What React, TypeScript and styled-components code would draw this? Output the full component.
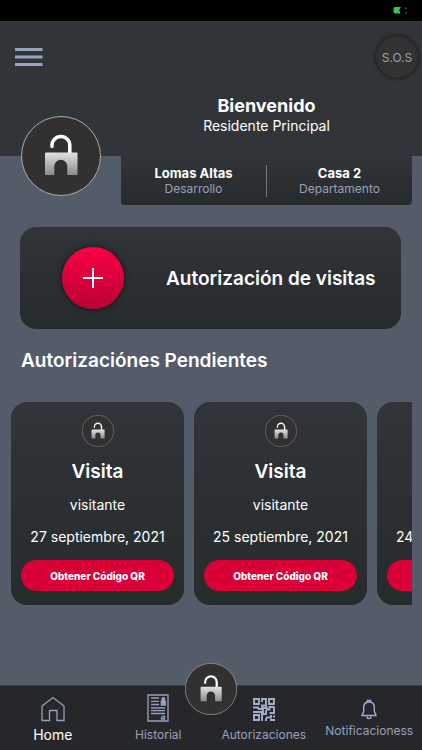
import React, { useId } from "react";
import styled, { createGlobalStyle } from "styled-components";

const GlobalStyle = createGlobalStyle`
  *, *::before, *::after { box-sizing: border-box; }
  body {
    margin: 0;
    background: #545b69;
    color: #fff;
    font-family: Inter, "Liberation Sans", sans-serif;
  }
  h1, h2, h3, p { margin: 0; }
  button { font: inherit; color: inherit; border: 0; padding: 0; cursor: pointer; }
  a { color: inherit; text-decoration: none; }
  svg { display: block; }
`;

const Screen = styled.div`
  display: flex;
  flex-direction: column;
  min-height: 100vh;
`;

const StatusBar = styled.div`
  display: flex;
  justify-content: flex-end;
  align-items: center;
  height: 21px;
  padding-right: 14px;
  background: #000;
`;

const Header = styled.header`
  background: #313439;
  padding: 15px 4px 22px 15px;
`;

const TopRow = styled.div`
  display: flex;
  justify-content: space-between;
  align-items: center;
`;

const MenuButton = styled.button`
  background: none;
`;

const SosButton = styled.button`
  width: 42px;
  height: 42px;
  border-radius: 50%;
  background: #333131;
  color: #98a1bb;
  font-size: 12px;
  box-shadow: 0 0 4px rgba(0, 0, 0, 0.7);
`;

const Greeting = styled.div`
  display: flex;
  flex-direction: column;
  align-items: center;
  margin: 16px 6px 0 106px;
`;

const GreetingTitle = styled.h1`
  font-size: 18px;
  line-height: 24px;
  font-weight: 700;
`;

const GreetingText = styled.p`
  font-size: 14px;
  line-height: 16px;
`;

const Profile = styled.section`
  display: flex;
  align-items: flex-start;
  gap: 20px;
  padding: 0 10px 0 21px;
`;

const Avatar = styled.div`
  flex: none;
  width: 80px;
  height: 80px;
  margin-top: -40px;
  margin-bottom: -18px;
`;

const HomePanel = styled.dl`
  flex: 1;
  display: flex;
  align-items: center;
  margin: 0;
  height: 49px;
  border-radius: 0 0 4px 4px;
  background: linear-gradient(#313439, #262b2c);
`;

const HomeFact = styled.div`
  flex: 1;
  display: flex;
  flex-direction: column-reverse;
  align-items: center;
  & + & { border-left: 1px solid #74777b; }
`;

const FactLabel = styled.dt`
  color: #98a1bb;
  font-size: 12px;
  line-height: 16px;
`;

const FactValue = styled.dd`
  margin: 0;
  font-size: 13px;
  line-height: 16px;
  font-weight: 700;
`;

const Authorize = styled.button`
  display: flex;
  align-items: center;
  gap: 42px;
  margin: 22px 21px 0 20px;
  padding: 20px 20px 20px 42px;
  border-radius: 16px;
  background: linear-gradient(#313439, #262b2c);
  font-size: 19px;
  font-weight: 600;
  text-align: left;
`;

const PlusDisc = styled.span`
  flex: none;
  display: grid;
  place-items: center;
  width: 62px;
  height: 62px;
  border-radius: 50%;
  background: linear-gradient(#fb0043, #bb0034);
  box-shadow: 0 0 6px rgba(0, 0, 0, 0.6);
`;

const SectionTitle = styled.h2`
  margin: 20px 21px 0;
  font-size: 19px;
  line-height: 24px;
  font-weight: 600;
`;

const Cards = styled.div`
  display: flex;
  gap: 10px;
  margin: 29px 10px 24px 11px;
  overflow-x: auto;
  scrollbar-width: none;
`;

const Card = styled.article`
  flex: none;
  display: flex;
  flex-direction: column;
  align-items: center;
  width: 173px;
  padding: 13px 10px 14px;
  border-radius: 16px;
  background: linear-gradient(#313439, #262b2c);
`;

const CardLogo = styled.div`
  width: 32px;
  height: 32px;
`;

const CardTitle = styled.h3`
  margin-top: 13px;
  font-size: 19px;
  line-height: 24px;
  font-weight: 600;
`;

const CardText = styled.p`
  font-size: 14px;
  line-height: 32px;
  white-space: nowrap;
`;

const CardTexts = styled.div`
  margin-top: 5px;
  text-align: center;
`;

const QrButton = styled.button`
  align-self: stretch;
  height: 31px;
  margin-top: 7px;
  border-radius: 16px;
  background: #d90038;
  font-size: 10px;
  font-weight: 800;
`;

const TabBar = styled.nav`
  position: sticky;
  bottom: 0;
  display: grid;
  grid-template-columns: repeat(4, 1fr);
  height: 65px;
  margin-top: auto;
  background: #26272b;
  border-top: 1px solid #3b3f47;
`;

const Tab = styled.a<{ $active?: boolean; $compact?: boolean }>`
  display: flex;
  flex-direction: column;
  align-items: center;
  justify-content: flex-end;
  gap: ${(p) => (p.$compact ? 2 : 4)}px;
  padding-bottom: ${(p) => (p.$compact ? 10 : 6)}px;
  color: ${(p) => (p.$active ? "#fff" : "#98a1bb")};
  font-size: ${(p) => (p.$active ? 14 : 12)}px;
  line-height: 18px;
  white-space: nowrap;
`;

const UnlockButton = styled.button`
  position: absolute;
  left: 50%;
  top: -23px;
  width: 52px;
  height: 52px;
  margin-left: -26px;
  border-radius: 50%;
  background: none;
`;

function LockLogo() {
  const id = useId();
  return (
    <svg viewBox="0 0 80 80" width="100%" height="100%" aria-hidden="true">
      <defs>
        <linearGradient id={id} x1="0" y1="0" x2="0" y2="1">
          <stop offset="0" stopColor="#e2e2e2" />
          <stop offset="1" stopColor="#8b8b8b" />
        </linearGradient>
      </defs>
      <circle cx="40" cy="40" r="39.5" fill="#333031" stroke="#aaa" strokeWidth="1" />
      <path d="M31 30.5V29.4a8.9 8.9 0 0 1 17.8 0V38" fill="none" stroke="#fff" strokeWidth="3.5" strokeLinecap="round" />
      <path d="M25 36.5H55.5a1 1 0 0 1 1 1V59H46.3V50.5a6.5 6.8 0 0 0-13 0V59H24V37.5a1 1 0 0 1 1-1z" fill={`url(#${id})`} />
    </svg>
  );
}

const MenuIcon = () => (
  <svg width="28" height="20" viewBox="0 0 28 20" aria-hidden="true">
    <path d="M0 2.5H27.5M0 10H27.5M0 17.5H27.5" stroke="#98a3c1" strokeWidth="3" />
  </svg>
);

const BatteryIcon = () => (
  <svg width="15" height="9" viewBox="0 0 15 9" aria-hidden="true">
    <path d="M1.5 1H8L6.2 4L7.5 7.5H1.5L.5 6V2.5z" fill="#35c65a" />
    <path d="M12 1.5h1.500v1.500H12zM12.5 6h1.500v1.500h-1.500z" fill="#237d3c" />
  </svg>
);

const HomeIcon = () => (
  <svg width="26" height="26" viewBox="0 0 26 26" fill="none" stroke="#98a1bb" strokeWidth="1.3" aria-hidden="true">
    <path d="M2 10L13 1.500L24 10V24.500H17V14.500H9.500V24.500H2z" />
  </svg>
);

const HistoryIcon = () => (
  <svg width="22" height="28" viewBox="0 0 22 28" fill="none" stroke="#98a1bb" strokeWidth="1.3" aria-hidden="true">
    <path d="M1 1H21V27H1z" />
    <path d="M4 4H12M4 7.300H12M4 10.500H12M4 14H18M4 16.700H18M4 19.500H18M14.500 23V25H17.500V22.500H15" />
    <path d="M14.300 7.500h4v3.500h-4zM15 7V5a1.300 1.300 0 0 1 2.600 0V7" fill="#98a1bb" />
  </svg>
);

const QrIcon = () => (
  <svg width="24" height="24" viewBox="0 0 24 24" fill="none" stroke="#a3aecb" strokeWidth="1.9" aria-hidden="true">
    <path d="M2 1H7V6H2zM17 1H22V6H17zM2 17H7V22H2z" />
    <path d="M9 1H14V7.500H10V11H6M10 1V4M1 9.500H6V11M1 14H5.500M5 14H11V10H14.500V8M22.500 9H17.500V11.500H14M22 9V15H17.500M14 12V16H10V23M14 20V23M14 19.500H19V17M22 17.500V19.500M18 22H23" />
  </svg>
);

const BellIcon = () => (
  <svg width="18" height="21" viewBox="0 0 18 21" fill="none" stroke="#a3aecb" strokeWidth="1.4" aria-hidden="true">
    <path d="M2 16.500C1.400 15.700 3.700 14 3.700 12V8C3.700 5 5.800 3 9 3S14.300 5 14.300 8V12C14.300 14 16.600 15.700 16 16.500Z" strokeLinejoin="round" />
    <path d="M7.500 3V1.500H10.500V3M7 17.500C7 20.300 11 20.300 11 17.500" />
  </svg>
);

const PlusIcon = () => (
  <svg width="20" height="20" viewBox="0 0 20 20" aria-hidden="true">
    <path d="M10 0V20M0 10H20" stroke="#fff" strokeWidth="2" />
  </svg>
);

const visits = ["27 septiembre, 2021", "25 septiembre, 2021", "24 septiembre, 2021"];

export default function App() {
  return (
    <Screen>
      <GlobalStyle />
      <StatusBar><BatteryIcon /></StatusBar>
      <Header>
        <TopRow>
          <MenuButton aria-label="Menú"><MenuIcon /></MenuButton>
          <SosButton>S.O.S</SosButton>
        </TopRow>
        <Greeting>
          <GreetingTitle>Bienvenido</GreetingTitle>
          <GreetingText>Residente Principal</GreetingText>
        </Greeting>
      </Header>
      <Profile>
        <Avatar><LockLogo /></Avatar>
        <HomePanel>
          <HomeFact>
            <FactLabel>Desarrollo</FactLabel>
            <FactValue>Lomas Altas</FactValue>
          </HomeFact>
          <HomeFact>
            <FactLabel>Departamento</FactLabel>
            <FactValue>Casa 2</FactValue>
          </HomeFact>
        </HomePanel>
      </Profile>
      <Authorize>
        <PlusDisc><PlusIcon /></PlusDisc>
        Autorización de visitas
      </Authorize>
      <SectionTitle>Autorizaciónes Pendientes</SectionTitle>
      <Cards>
        {visits.map((date) => (
          <Card key={date}>
            <CardLogo><LockLogo /></CardLogo>
            <CardTitle>Visita</CardTitle>
            <CardTexts>
              <CardText>visitante</CardText>
              <CardText>{date}</CardText>
            </CardTexts>
            <QrButton>Obtener Código QR</QrButton>
          </Card>
        ))}
      </Cards>
      <TabBar>
        <Tab href="#home" $active><HomeIcon />Home</Tab>
        <Tab href="#historial"><HistoryIcon />Historial</Tab>
        <Tab href="#autorizaciones"><QrIcon />Autorizaciones</Tab>
        <Tab href="#notificaciones" $compact><BellIcon />Notificacioness</Tab>
        <UnlockButton aria-label="Abrir"><LockLogo /></UnlockButton>
      </TabBar>
    </Screen>
  );
}
